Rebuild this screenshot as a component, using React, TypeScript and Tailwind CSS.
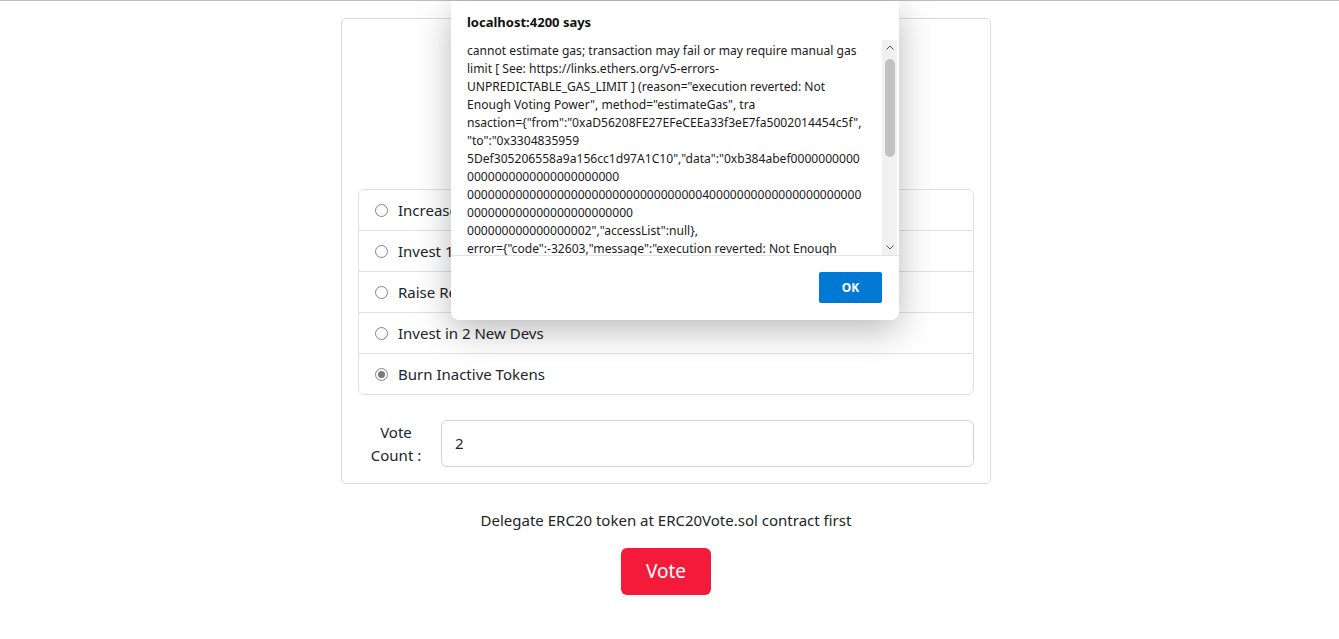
import React from "react";

const lines = [
  "cannot estimate gas; transaction may fail or may require manual gas",
  "limit [ See: https://links.ethers.org/v5-errors-",
  "UNPREDICTABLE_GAS_LIMIT ] (reason=\"execution reverted: Not",
  "Enough Voting Power\", method=\"estimateGas\", tra",
  "nsaction={\"from\":\"0xaD56208FE27EFeCEEa33f3eE7fa5002014454c5f\",",
  "\"to\":\"0x3304835959",
  "5Def305206558a9a156cc1d97A1C10\",\"data\":\"0xb384abef0000000000",
  "0000000000000000000000",
  "000000000000000000000000000000000040000000000000000000000",
  "000000000000000000000000",
  "000000000000000002\",\"accessList\":null},",
  "error={\"code\":-32603,\"message\":\"execution reverted: Not Enough",
];

const options = [
  "Increase Reward Rate",
  "Invest 1 ETH in Marketing",
  "Raise Rewards for Devs",
  "Invest in 2 New Devs",
  "Burn Inactive Tokens",
];

function Radio({ checked }: { checked?: boolean }) {
  return (
    <span className="flex h-[13px] w-[13px] items-center justify-center rounded-full border border-[#858585] bg-white">
      {checked && <span className="h-[7px] w-[7px] rounded-full bg-[#7a7a7a]" />}
    </span>
  );
}

export default function App() {
  return (
    <div
      className="relative min-h-[639px] w-full overflow-hidden bg-white text-[#212529]"
      style={{ fontFamily: '"Noto Sans", "Open Sans", sans-serif' }}
    >
      <div className="h-px w-full bg-[#bdbdbd]" />
      <div className="ml-[341px] flex w-[650px] flex-col items-center">
        <div className="mt-[17px] w-full rounded-[5px] border border-[#dadde0] px-4 pb-4 pt-4">
          <div className="h-[154px]" />
          <div className="flex flex-col overflow-hidden rounded-[6px] border border-[#dee2e6]">
            {options.map((o, i) => (
              <div
                key={o}
                className={`flex items-center gap-[10px] pl-[16px] text-[15px] ${
                  i > 0 ? "h-[41px] border-t border-[#dee2e6]" : "h-[40px]"
                }`}
              >
                <Radio checked={i === 4} />
                <span>{o}</span>
              </div>
            ))}
          </div>
          <div className="mt-[25px] flex items-center">
            <div className="w-[76px] text-center text-[15px] leading-[23px]">
              Vote
              <br />
              Count :
            </div>
            <div className="ml-[7px] flex h-[47px] flex-1 items-center rounded-[6px] border border-[#ced4da] pl-[13px] text-[15px]">
              2
            </div>
          </div>
        </div>
        <div className="mt-[24px] text-[15px] leading-[24px]">
          Delegate ERC20 token at ERC20Vote.sol contract first
        </div>
        <button className="mt-[16px] flex h-[47px] w-[90px] items-center justify-center rounded-[6px] bg-[#f41b3a] text-[19px] text-white">
          Vote
        </button>
      </div>

      <div className="absolute left-[451px] top-px flex h-[319px] w-[448px] flex-col rounded-b-[8px] bg-white shadow-[0_10px_36px_rgba(0,0,0,0.28)]">
        <div className="pl-[16px] pt-[13px] text-[13px] font-bold leading-[17px] text-[#111]">
          localhost:4200 says
        </div>
        <div className="mt-[9px] flex h-[216px] border-b border-[#e3e3e3]">
          <div className="flex-1 overflow-hidden pl-[16px] pt-[2px] text-[12.1px] leading-[18px] text-[#1a1a1a]">
            {lines.map((l, i) => (
              <div key={i} className="whitespace-nowrap">
                {l}
              </div>
            ))}
          </div>
          <div className="relative mr-[2px] w-[15px] bg-[#f1f1f1]">
            <svg className="absolute left-[4px] top-[5px]" width="8" height="5" viewBox="0 0 8 5">
              <path d="M0.5 4.5 L4 1 L7.5 4.5" fill="none" stroke="#505050" strokeWidth="1" />
            </svg>
            <div className="absolute left-[3px] top-[19px] h-[98px] w-[10px] rounded-[5px] bg-[#c1c1c1]" />
            <svg className="absolute bottom-[5px] left-[4px]" width="8" height="5" viewBox="0 0 8 5">
              <path d="M0.5 0.5 L4 4 L7.5 0.5" fill="none" stroke="#505050" strokeWidth="1" />
            </svg>
          </div>
        </div>
        <div className="flex justify-end pr-[17px] pt-[16px]">
          <button className="flex h-[31px] w-[63px] items-center justify-center rounded-[2px] bg-[#0078d4] text-[12px] font-bold text-white">
            OK
          </button>
        </div>
      </div>
    </div>
  );
}
